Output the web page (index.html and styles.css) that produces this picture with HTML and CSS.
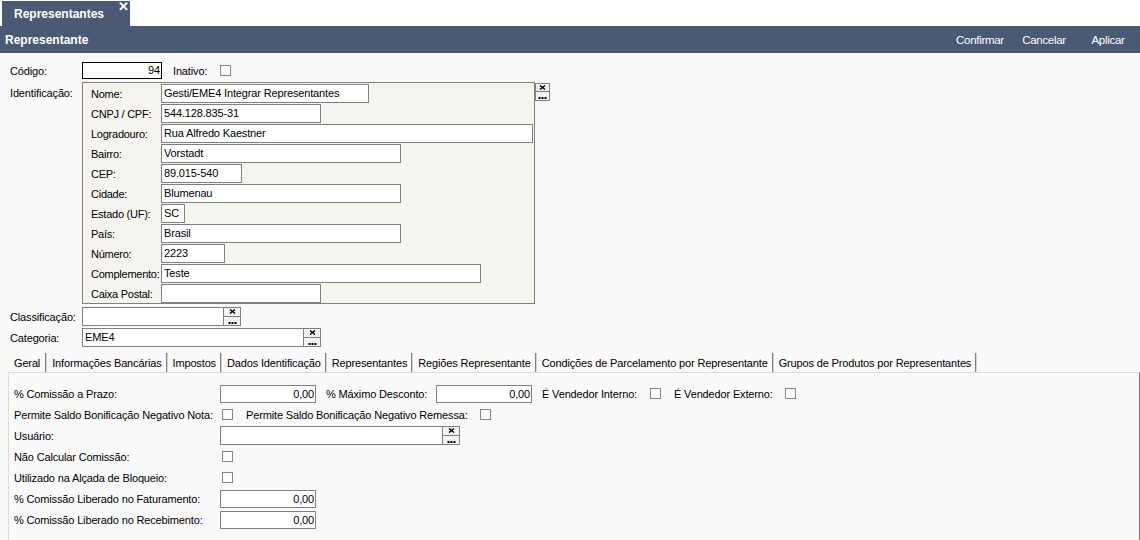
FILE: index.html
```html
<!DOCTYPE html>
<html lang="pt-BR">
<head>
<meta charset="utf-8">
<title>Representantes</title>
<link rel="stylesheet" href="styles.css">
</head>
<body>
<div class="tabstrip">
  <div class="doctab"><span class="doctab-title">Representantes</span><span class="close">✕</span></div>
</div>
<div class="header">
  <span class="title">Representante</span>
  <div class="actions">
    <span class="action">Confirmar</span>
    <span class="action">Cancelar</span>
    <span class="action">Aplicar</span>
  </div>
</div>

<div class="form">
  <div class="frow r-codigo">
    <span class="flabel">Código:</span>
    <span class="inp inp-code w80">94</span>
    <span class="lbl-inativo">Inativo:</span>
    <span class="chk"></span>
  </div>

  <div class="frow r-ident">
    <span class="flabel lbl-top">Identificação:</span>
    <div class="group">
      <div class="grow"><span class="glabel">Nome:</span><span class="inp w208">Gesti/EME4 Integrar Representantes</span></div>
      <div class="grow"><span class="glabel">CNPJ / CPF:</span><span class="inp w160">544.128.835-31</span></div>
      <div class="grow"><span class="glabel">Logradouro:</span><span class="inp w372">Rua Alfredo Kaestner</span></div>
      <div class="grow"><span class="glabel">Bairro:</span><span class="inp w240">Vorstadt</span></div>
      <div class="grow"><span class="glabel">CEP:</span><span class="inp w81">89.015-540</span></div>
      <div class="grow"><span class="glabel">Cidade:</span><span class="inp w240">Blumenau</span></div>
      <div class="grow"><span class="glabel">Estado (UF):</span><span class="inp w24">SC</span></div>
      <div class="grow"><span class="glabel">País:</span><span class="inp w240">Brasil</span></div>
      <div class="grow"><span class="glabel">Número:</span><span class="inp w64">2223</span></div>
      <div class="grow"><span class="glabel">Complemento:</span><span class="inp w320">Teste</span></div>
      <div class="grow"><span class="glabel">Caixa Postal:</span><span class="inp w160"></span></div>
    </div>
    <span class="pick pick-top">
      <span class="pk"><svg width="7" height="5" viewBox="0 0 7 5"><path d="M1 0.5L6 4.5M6 0.5L1 4.5" stroke="#000" stroke-width="1.4"/></svg></span>
      <span class="pk"><svg width="9" height="2" viewBox="0 0 9 2"><rect x="0.5" y="0" width="2" height="2"/><rect x="3.5" y="0" width="2" height="2"/><rect x="6.5" y="0" width="2" height="2"/></svg></span>
    </span>
  </div>

  <div class="frow r-lookup r-class">
    <span class="flabel">Classificação:</span>
    <span class="inp w142"></span>
    <span class="pick">
      <span class="pk"><svg width="7" height="5" viewBox="0 0 7 5"><path d="M1 0.5L6 4.5M6 0.5L1 4.5" stroke="#000" stroke-width="1.4"/></svg></span>
      <span class="pk"><svg width="9" height="2" viewBox="0 0 9 2"><rect x="0.5" y="0" width="2" height="2"/><rect x="3.5" y="0" width="2" height="2"/><rect x="6.5" y="0" width="2" height="2"/></svg></span>
    </span>
  </div>

  <div class="frow r-lookup r-cat">
    <span class="flabel">Categoria:</span>
    <span class="inp w222">EME4</span>
    <span class="pick">
      <span class="pk"><svg width="7" height="5" viewBox="0 0 7 5"><path d="M1 0.5L6 4.5M6 0.5L1 4.5" stroke="#000" stroke-width="1.4"/></svg></span>
      <span class="pk"><svg width="9" height="2" viewBox="0 0 9 2"><rect x="0.5" y="0" width="2" height="2"/><rect x="3.5" y="0" width="2" height="2"/><rect x="6.5" y="0" width="2" height="2"/></svg></span>
    </span>
  </div>
</div>

<div class="tabs">
  <span class="tab active">Geral</span>
  <span class="tab">Informações Bancárias</span>
  <span class="tab">Impostos</span>
  <span class="tab">Dados Identificação</span>
  <span class="tab">Representantes</span>
  <span class="tab">Regiões Representante</span>
  <span class="tab">Condições de Parcelamento por Representante</span>
  <span class="tab">Grupos de Produtos por Representantes</span>
</div>

<div class="panel">
  <div class="prow">
    <span class="plabel">% Comissão a Prazo:</span>
    <span class="inp num w96">0,00</span>
    <span class="plabel-mid w110">% Máximo Desconto:</span>
    <span class="inp num w96">0,00</span>
    <span class="plabel-mid w108">É Vendedor Interno:</span>
    <span class="chk"></span>
    <span class="plabel-mid gap13 w111">É Vendedor Externo:</span>
    <span class="chk"></span>
  </div>
  <div class="prow">
    <span class="plabel pl-chk">Permite Saldo Bonificação Negativo Nota:</span>
    <span class="chk"></span>
    <span class="plabel-mid gap13 w234">Permite Saldo Bonificação Negativo Remessa:</span>
    <span class="chk"></span>
  </div>
  <div class="prow">
    <span class="plabel">Usuário:</span>
    <span class="inp w223"></span>
    <span class="pick">
      <span class="pk"><svg width="7" height="5" viewBox="0 0 7 5"><path d="M1 0.5L6 4.5M6 0.5L1 4.5" stroke="#000" stroke-width="1.4"/></svg></span>
      <span class="pk"><svg width="9" height="2" viewBox="0 0 9 2"><rect x="0.5" y="0" width="2" height="2"/><rect x="3.5" y="0" width="2" height="2"/><rect x="6.5" y="0" width="2" height="2"/></svg></span>
    </span>
  </div>
  <div class="prow">
    <span class="plabel pl-chk">Não Calcular Comissão:</span>
    <span class="chk"></span>
  </div>
  <div class="prow">
    <span class="plabel pl-chk">Utilizado na Alçada de Bloqueio:</span>
    <span class="chk"></span>
  </div>
  <div class="prow">
    <span class="plabel">% Comissão Liberado no Faturamento:</span>
    <span class="inp num w96">0,00</span>
  </div>
  <div class="prow">
    <span class="plabel">% Comissão Liberado no Recebimento:</span>
    <span class="inp num w96">0,00</span>
  </div>
</div>
</body>
</html>
```
FILE: styles.css
```css
* { box-sizing: border-box; }

body {
  margin: 0;
  width: 1140px;
  height: 540px;
  overflow: hidden;
  background: #fafafa;
  font-family: "Liberation Sans", Arial, sans-serif;
  font-size: 11px;
  letter-spacing: -0.15px;
  color: #000;
}

/* top document tab strip */
.tabstrip {
  height: 26px;
  background: #fff;
  padding: 1px 0 0 2px;
  display: flex;
}
.doctab {
  width: 128px;
  height: 25px;
  background: #4a5a74;
  color: #fff;
  display: flex;
  align-items: center;
  padding-left: 12px;
}
.doctab-title {
  font-weight: bold;
  font-size: 12px;
  letter-spacing: 0;
}
.close {
  margin-left: auto;
  align-self: flex-start;
  font-weight: bold;
  font-size: 13px;
  line-height: 12px;
  padding-right: 1px;
}

/* header bar */
.header {
  height: 27px;
  background: #4a5a74;
  color: #fff;
  display: flex;
  align-items: center;
}
.title {
  font-weight: bold;
  font-size: 12px;
  letter-spacing: 0;
  padding-left: 5px;
}
.actions {
  margin-left: auto;
  display: flex;
}
.action {
  width: 64px;
  text-align: center;
  font-size: 11.5px;
  letter-spacing: -0.3px;
}

/* main form */
.form {
  padding: 9px 0 0 10px;
}
.frow {
  display: flex;
  align-items: center;
}
.flabel {
  width: 72px;
  flex: none;
}
.r-codigo { height: 17px; }
.r-ident { margin-top: 3px; align-items: flex-start; }
.lbl-top { padding-top: 5px; }
.r-class { margin-top: 3px; }
.r-cat { margin-top: 2px; }

.inp {
  display: block;
  flex: none;
  height: 19px;
  line-height: 17px;
  background: #fff;
  border: 1px solid #808080;
  padding: 0 2px;
  white-space: nowrap;
  overflow: hidden;
}
.inp-code {
  height: 17px;
  line-height: 15px;
  border-color: #000;
  text-align: right;
  padding-right: 1px;
}
.num {
  height: 18px;
  line-height: 16px;
  text-align: right;
  padding-right: 1px;
}
.w24 { width: 24px; }
.w64 { width: 64px; }
.w80 { width: 80px; }
.w81 { width: 81px; }
.w96 { width: 96px; }
.w142 { width: 142px; }
.w160 { width: 160px; }
.w208 { width: 208px; }
.w222 { width: 222px; }
.w223 { width: 223px; }
.w240 { width: 240px; }
.w320 { width: 320px; }
.w372 { width: 372px; }

.lbl-inativo {
  margin-left: 11px;
  width: 47px;
}

.chk {
  display: block;
  flex: none;
  width: 11px;
  height: 11px;
  background: #fff;
  border: 1px solid #858585;
}

/* identification group */
.group {
  width: 453px;
  background: #f5f4ef;
  border: 1px solid #808080;
}
.grow {
  height: 20px;
  display: flex;
  align-items: flex-end;
  padding-left: 8px;
}
.glabel {
  width: 70px;
  flex: none;
  align-self: center;
  padding-top: 1px;
  letter-spacing: -0.25px;
}

/* lookup buttons (clear / search) */
.pick {
  display: flex;
  flex-direction: column;
  flex: none;
  width: 17px;
  height: 19px;
  border: 1px solid #808080;
  border-left: none;
  background: #f2f2f2;
}
.pick-top {
  margin-top: 1px;
  border-left: 1px solid #808080;
  width: 15px;
  height: 18px;
}
.pk {
  flex: 1;
  display: flex;
  align-items: center;
  justify-content: center;
}
.pk + .pk {
  border-top: 1px solid #808080;
  align-items: flex-end;
  padding-bottom: 1px;
}

/* tabs */
.tabs {
  margin-top: 6px;
  padding-left: 8px;
  display: flex;
  height: 19px;
}
.tab {
  height: 19px;
  line-height: 19px;
  padding: 1px 4px 0 5px;
  border-right: 1px solid #808080;
  box-shadow: 1px 0 0 #d4d4d4;
  margin-right: 1px;
  white-space: nowrap;
}
.tab.active {
  padding: 1px 5px 0 6px;
}

/* tab panel */
.panel {
  margin-left: 8px;
  height: 168px;
  border-top: 1px solid #dcdcdc;
  border-left: 1px solid #dcdcdc;
  border-right: 1px solid #7a7a7a;
  padding: 10px 0 0 5px;
}
.prow {
  height: 21px;
  display: flex;
  align-items: center;
}
.plabel {
  width: 206px;
  flex: none;
}
.plabel.pl-chk { width: 208px; }
.plabel-mid {
  flex: none;
  margin-left: 10px;
}
.plabel-mid.gap13 { margin-left: 13px; }
.w108 { width: 108px; }
.w110 { width: 110px; }
.w111 { width: 111px; }
.w234 { width: 234px; }
```
